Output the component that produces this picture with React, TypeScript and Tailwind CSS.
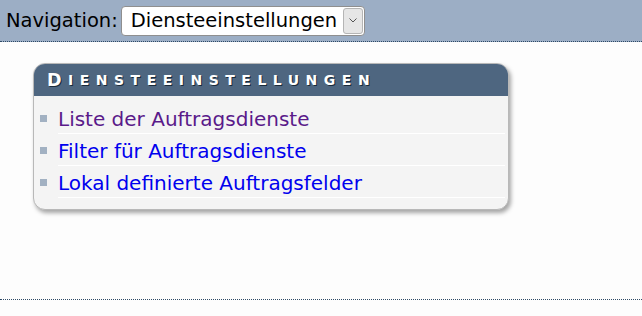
export default function App() {
  const links = [
    { label: "Liste der Auftragsdienste", visited: true },
    { label: "Filter für Auftragsdienste", visited: false },
    { label: "Lokal definierte Auftragsfelder", visited: false },
  ];

  return (
    <div className="h-[316px] w-[642px] bg-[#fdfdfd] font-['DejaVu_Sans',sans-serif] text-black">
      <div className="flex h-[42px] items-center border-b border-dotted border-[#2f4a66] bg-[#9caec5] pl-[6px]">
        <span className="text-[19.5px]">Navigation:</span>
        <div className="ml-[3px] flex h-[30px] items-center rounded-[4px] border border-[#8f8f8f] bg-white">
          <span className="pl-[9px] pr-[6px] text-[19.5px]">Diensteeinstellungen</span>
          <span className="mr-[1px] flex h-[26px] w-[20px] items-center justify-center rounded-[3px] border border-[#b5b5b5] bg-[#e6e6e6]">
            <svg width="8" height="5" viewBox="0 0 8 5" fill="none">
              <path d="M0.5 0.5 L4 4 L7.5 0.5" stroke="#555" strokeWidth="1" />
            </svg>
          </span>
        </div>
      </div>

      <div className="h-[258px] border-b border-dotted border-[#2f4a66] pl-[33px] pt-[21px]">
        <div className="w-[476px] overflow-hidden rounded-[12px] border border-[#b8b8b8] bg-[#f4f4f4] shadow-[2px_3px_4px_rgba(0,0,0,0.35)]">
          <div className="flex h-[32px] items-center bg-[#4e6680] pl-[13px] pt-[1px] font-bold uppercase tracking-[6.5px] text-white [text-shadow:1px_1px_0_#1a2a3a]">
            <span className="text-[17.5px]">D</span>
            <span className="text-[14px]">iensteeinstellungen</span>
          </div>
          <ul className="pb-[11px] pt-[6px]">
            {links.map((l) => (
              <li key={l.label} className="flex h-[32px] items-center pl-[6px]">
                <span className="mr-[11px] h-[7px] w-[7px] bg-[#a2b1c2]" />
                <span className="mr-[3px] flex h-full flex-1 items-center border-b border-white pt-[3px]">
                  <span className={"text-[20px] " + (l.visited ? "text-[#5a1a8a]" : "text-[#0000ee]")}>
                    {l.label}
                  </span>
                </span>
              </li>
            ))}
          </ul>
        </div>
      </div>
    </div>
  );
}
